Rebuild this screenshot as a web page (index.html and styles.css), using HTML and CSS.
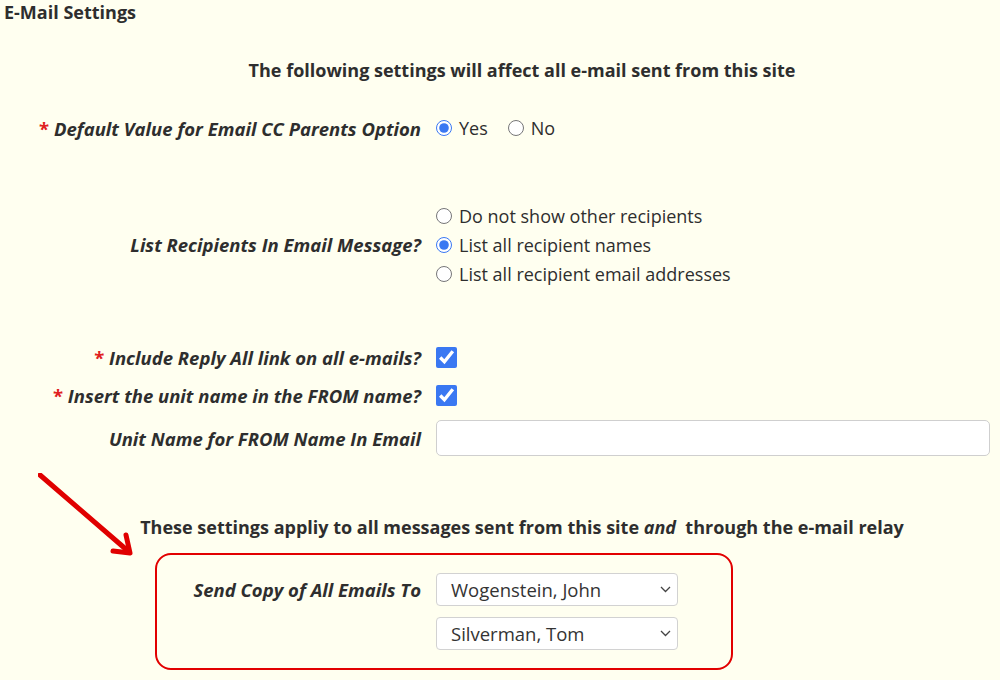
FILE: index.html
```html
<!DOCTYPE html>
<html>
<head>
<meta charset="utf-8">
<link rel="stylesheet" href="styles.css">
</head>
<body>
<div class="page">
  <div class="title">E-Mail Settings</div>
  <div class="main">
    <div class="heading h1">The following settings will affect all e-mail sent from this site</div>

    <div class="row row-cc">
      <div class="label"><span class="req">*</span> Default Value for Email CC Parents Option</div>
      <div class="ctrl inline">
        <label class="opt"><input type="radio" name="cc" checked> Yes</label>
        <label class="opt"><input type="radio" name="cc"> No</label>
      </div>
    </div>

    <div class="row row-list">
      <div class="label">List Recipients In Email Message?</div>
      <div class="ctrl stack">
        <label class="opt"><input type="radio" name="lr"> Do not show other recipients</label>
        <label class="opt"><input type="radio" name="lr" checked> List all recipient names</label>
        <label class="opt"><input type="radio" name="lr"> List all recipient email addresses</label>
      </div>
    </div>

    <div class="row row-reply">
      <div class="label"><span class="req">*</span> Include Reply All link on all e-mails?</div>
      <div class="ctrl"><input class="chk" type="checkbox" checked></div>
    </div>

    <div class="row row-insert">
      <div class="label"><span class="req">*</span> Insert the unit name in the FROM name?</div>
      <div class="ctrl"><input class="chk" type="checkbox" checked></div>
    </div>

    <div class="row row-unit">
      <div class="label">Unit Name for FROM Name In Email</div>
      <div class="ctrl"><input class="text" type="text"></div>
    </div>

    <div class="heading h2">These settings appliy to all messages sent from this site <em>and</em>&nbsp; through the e-mail relay</div>

    <div class="box">
      <div class="box-label">Send Copy of All Emails To</div>
      <div class="box-ctrls">
        <div class="select"><span>Wogenstein, John</span><svg width="11" height="7" viewBox="0 0 11 7"><path d="M1 1 L5.5 5.5 L10 1" fill="none" stroke="#444" stroke-width="1.3"/></svg></div>
        <div class="select"><span>Silverman, Tom</span><svg width="11" height="7" viewBox="0 0 11 7"><path d="M1 1 L5.5 5.5 L10 1" fill="none" stroke="#444" stroke-width="1.3"/></svg></div>
      </div>
    </div>
  </div>
  <svg class="arrow" width="110" height="100" viewBox="0 0 110 100">
    <path d="M2 2 L90 78" stroke="#e00000" stroke-width="5" stroke-linecap="round" fill="none"/>
    <path d="M88 62 L92 80 L75 78" stroke="#e00000" stroke-width="5" stroke-linecap="round" stroke-linejoin="round" fill="none"/>
  </svg>
</div>
</body>
</html>
```

FILE: styles.css
```css
html, body {
  margin: 0;
  padding: 0;
  background: #fffff0;
}
body {
  font-family: "Open Sans", "Noto Sans", sans-serif;
  color: #2e2e2e;
  width: 1000px;
  height: 680px;
  overflow: hidden;
}
.page {
  position: relative;
  height: 680px;
}
.title {
  font-weight: 700;
  font-size: 18px;
  line-height: 24px;
  padding-left: 4px;
}
.main {
  width: 1000px;
}
.heading {
  font-weight: 700;
  font-size: 18px;
  line-height: 24px;
  text-align: center;
  padding-left: 44px;
}
.h1 { margin-top: 34px; }
.h2 { margin-top: 59px; }
.h2 em { font-style: italic; }
.row {
  display: grid;
  grid-template-columns: 421px 1fr;
  column-gap: 15px;
  align-items: center;
}
.label {
  text-align: right;
  font-weight: 700;
  font-style: italic;
  font-size: 18.5px;
  white-space: nowrap;
}
.req { color: #e02020; font-style: normal; }
.ctrl { font-size: 18px; }
.inline { display: flex; gap: 20px; }
.stack { display: flex; flex-direction: column; }
.opt {
  display: flex;
  align-items: center;
  height: 29px;
}
.opt input {
  margin: 0 7px 0 0;
  width: 16px;
  height: 16px;
  accent-color: #3a78f2;
}
.row-cc { margin-top: 30px; height: 32px; }
.row-list { margin-top: 57px; height: 87px; }
.row-reply { margin-top: 53px; height: 32px; }
.row-insert { margin-top: 6px; height: 32px; }
.row-unit { margin-top: 9px; height: 36px; }
.chk {
  margin: 0;
  width: 21px;
  height: 21px;
  accent-color: #3a78f2;
  display: block;
}
.text {
  box-sizing: border-box;
  display: block;
  width: 554px;
  height: 36px;
  margin: 0;
  border: 1px solid #cfcfcf;
  border-radius: 5px;
  background: #fff;
}
.box {
  box-sizing: border-box;
  margin: 14px 0 0 155px;
  width: 578px;
  height: 117px;
  border: 2px solid #e20000;
  border-radius: 16px;
  display: grid;
  grid-template-columns: 264px 242px;
  column-gap: 15px;
  padding-top: 18px;
}
.box-label {
  text-align: right;
  font-weight: 700;
  font-style: italic;
  font-size: 18.5px;
  line-height: 33px;
  white-space: nowrap;
}
.box-ctrls {
  display: flex;
  flex-direction: column;
  gap: 11px;
}
.select {
  box-sizing: border-box;
  height: 33px;
  border: 1px solid #d2d2d2;
  border-radius: 4px;
  background: #fff;
  display: flex;
  align-items: center;
  justify-content: space-between;
  padding: 0 6px 0 14px;
  font-size: 18.5px;
  color: #333;
}
.arrow {
  position: absolute;
  left: 38px;
  top: 473px;
}
```
